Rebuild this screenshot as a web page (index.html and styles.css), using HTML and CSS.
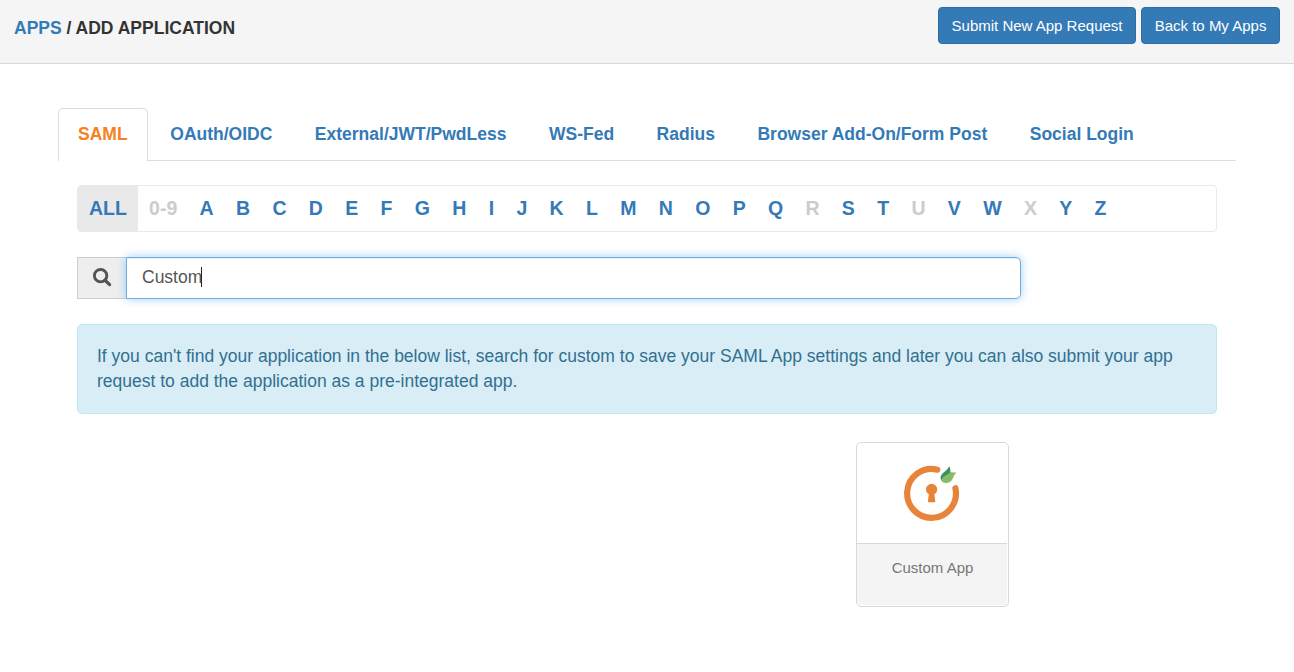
FILE: index.html
```html
<!DOCTYPE html>
<html lang="en">
<head>
<meta charset="utf-8">
<title>Add Application</title>
<link rel="stylesheet" href="styles.css">
</head>
<body>
<header class="topbar">
  <h1 class="crumbs"><a href="#">APPS</a> / ADD APPLICATION</h1>
  <div class="actions">
    <a class="btn" href="#">Submit New App Request</a>
    <a class="btn" href="#">Back to My Apps</a>
  </div>
</header>
<main class="content">
  <nav class="tabs">
    <a class="tab active" href="#">SAML</a>
    <a class="tab" href="#">OAuth/OIDC</a>
    <a class="tab" href="#">External/JWT/PwdLess</a>
    <a class="tab" href="#">WS-Fed</a>
    <a class="tab" href="#">Radius</a>
    <a class="tab" href="#">Browser Add-On/Form Post</a>
    <a class="tab" href="#">Social Login</a>
  </nav>
  <section class="panel">
    <div class="letters">
      <a class="all" href="#">ALL</a><a class="off">0-9</a><a href="#">A</a><a href="#">B</a><a href="#">C</a><a href="#">D</a><a href="#">E</a><a href="#">F</a><a href="#">G</a><a href="#">H</a><a href="#">I</a><a href="#">J</a><a href="#">K</a><a href="#">L</a><a href="#">M</a><a href="#">N</a><a href="#">O</a><a href="#">P</a><a href="#">Q</a><a class="off">R</a><a href="#">S</a><a href="#">T</a><a class="off">U</a><a href="#">V</a><a href="#">W</a><a class="off">X</a><a href="#">Y</a><a href="#">Z</a>
    </div>
    <div class="search">
      <span class="addon">
        <svg width="20" height="20" viewBox="0 0 20 20" fill="none" stroke="#555"><circle cx="8.6" cy="7.7" r="6.2" stroke-width="2.9"/><path d="M13 12.2L17.6 16.6" stroke-width="3.3" stroke-linecap="round"/></svg>
      </span>
      <div class="field"><span>Custom</span><i class="caret"></i></div>
    </div>
    <div class="info">If you can't find your application in the below list, search for custom to save your SAML App settings and later you can also submit your app request to add the application as a pre-integrated app.</div>
    <div class="apps">
      <a class="card" href="#">
        <span class="logo">
          <svg width="60" height="60" viewBox="0 0 60 60">
            <path d="M35.3 6.7A24.4 24.4 0 1 0 53.4 25.2" fill="none" stroke="#e8833a" stroke-width="6.2" stroke-linecap="round"/>
            <circle cx="29.6" cy="26.4" r="5.6" fill="#e8833a"/>
            <path d="M27.2 28h4.8l1.3 10.300q.1 1-.9 1h-5.600q-1 0-.9-1z" fill="#e8833a"/>
            <path d="M38.700 16C37.300 10.500 45 8.500 47.300 3.200C49.500 8 48.500 13 42.500 18C40.500 18.500 39.500 18 38.700 16Z" fill="#3d9160"/>
            <path d="M39.300 17C42 11.500 46 12.500 48.500 9C50 9.700 52.500 9.200 54.600 9.800C50.500 12 52 18.500 46 19.800C42.500 20.500 40 19.500 39.300 17Z" fill="#86bb68"/>
          </svg>
        </span>
        <span class="name">Custom App</span>
      </a>
    </div>
  </section>
</main>
</body>
</html>
```
FILE: styles.css
```css
* { box-sizing: border-box; }
body {
  margin: 0;
  font: 17.5px/25px "Liberation Sans", Arial, sans-serif;
  color: #333;
  background: #fff;
}
a { color: #337ab7; text-decoration: none; }
.topbar {
  display: flex;
  justify-content: space-between;
  align-items: flex-start;
  height: 64px;
  padding: 7px 14px 0;
  background: #f5f5f5;
  border-bottom: 1px solid #d9d9d9;
}
.crumbs { margin: 9px 0 0; font-size: 17.5px; line-height: 25px; }
.actions { display: flex; gap: 5px; }
.btn {
  height: 37px;
  padding: 0 12.6px;
  border: 1px solid #2e6da4;
  border-radius: 4px;
  background: #337ab7;
  color: #fff;
  font-size: 15px;
  line-height: 36px;
}
.content { padding: 44px 58px 0; }
.tabs {
  display: flex;
  gap: 2.5px;
  height: 53px;
  border-bottom: 1px solid #ddd;
}
.tab {
  height: 53px;
  padding: 0 19px;
  border: 1px solid transparent;
  border-bottom: 0;
  border-radius: 5px 5px 0 0;
  font-weight: bold;
  line-height: 50px;
}
.tab.active { color: #f58220; background: #fff; border-color: #ddd; }
.tab:nth-child(2) { margin-left: .2px; }
.panel { padding: 24px 19px 0; }
.letters {
  display: flex;
  height: 47px;
  border: 1px solid #eaeaea;
  border-radius: 4px;
  overflow: hidden;
  font-size: 19.5px;
  font-weight: bold;
  line-height: 45px;
}
.letters a { padding: 0 11.17px; }
.letters .all { padding: 0 11px; background: #e9e9e9; }
.letters .off { color: #ccc; }
.search { display: flex; width: 944px; height: 42px; margin-top: 25px; }
.addon {
  display: flex;
  align-items: center;
  justify-content: center;
  width: 49px;
  background: #eee;
  border: 1px solid #ccc;
  border-right: 0;
}
.field {
  display: flex;
  align-items: center;
  flex: 1;
  padding: 0 15px 2px;
  border: 1px solid #66afe9;
  border-radius: 0 5px 5px 0;
  background: #fff;
  color: #555;
  box-shadow: inset 0 1px 1px rgba(0,0,0,.075), 0 0 10px rgba(102,175,233,.6);
}
.caret { width: 1px; height: 20px; margin-left: -1px; background: #222; }
.info {
  height: 90px;
  margin-top: 25px;
  padding: 19px 19px;
  border: 1px solid #bce8f1;
  border-radius: 5px;
  background: #d9edf7;
  color: #31708f;
}
.apps { display: flex; justify-content: flex-end; padding: 28px 208px 0 0; }
.card {
  display: flex;
  flex-direction: column;
  width: 153px;
  height: 165px;
  padding: 0 1px 1px 0;
  border: 1px solid #d9d9d9;
  border-radius: 5px;
}
.logo {
  display: flex;
  align-items: center;
  justify-content: center;
  height: 101px;
  border-bottom: 1px solid #d9d9d9;
}
.name {
  flex: 1;
  padding: 11px 0 0 1px;
  background: #f4f4f4;
  color: #777;
  font-size: 15px;
  line-height: 25px;
  text-align: center;
}
```
